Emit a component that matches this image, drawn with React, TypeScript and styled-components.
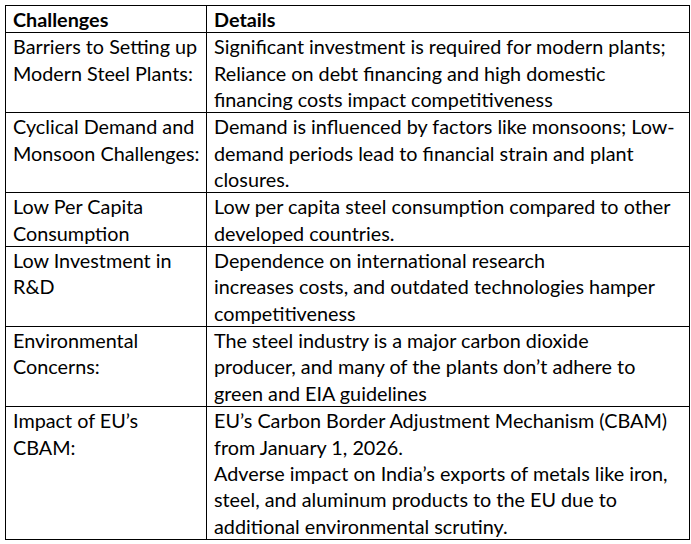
import React from "react";
import styled, { createGlobalStyle } from "styled-components";

const Global = createGlobalStyle`
  html, body { margin: 0; padding: 0; background: #ffffff; }
  body { font-family: "Lato", "Liberation Sans", sans-serif; color: #000; }
`;

const Page = styled.div`
  padding: 5px 0 0 5px;
  width: 691px;
  height: 544px;
  box-sizing: border-box;
`;

const Table = styled.table`
  border-collapse: collapse;
  width: 685px;
  table-layout: fixed;
  font-size: 19.8px;
  line-height: 26.35px;
`;

const Cell = styled.td<{ $head?: boolean }>`
  border: 1px solid #000;
  padding: 0 4px 0 7px;
  vertical-align: top;
  font-weight: ${(p) => (p.$head ? 700 : 400)};
  white-space: nowrap;
`;

const Line = styled.div`
  display: block;
`;

type Row = { c: string[]; d: string[] };

const rows: Row[] = [
  {
    c: ["Barriers to Setting up", "Modern Steel Plants:"],
    d: [
      "Significant investment is required for modern plants;",
      "Reliance on debt financing and high domestic",
      "financing costs impact competitiveness",
    ],
  },
  {
    c: ["Cyclical Demand and", "Monsoon Challenges:"],
    d: [
      "Demand is influenced by factors like monsoons; Low-",
      "demand periods lead to financial strain and plant",
      "closures.",
    ],
  },
  {
    c: ["Low Per Capita", "Consumption"],
    d: ["Low per capita steel consumption compared to other", "developed countries."],
  },
  {
    c: ["Low Investment in", "R&D"],
    d: [
      "Dependence on international research",
      "increases costs, and outdated technologies hamper",
      "competitiveness",
    ],
  },
  {
    c: ["Environmental", "Concerns:"],
    d: [
      "The steel industry is a major carbon dioxide",
      "producer, and many of the plants don\u2019t adhere to",
      "green and EIA guidelines",
    ],
  },
  {
    c: ["Impact of EU\u2019s", "CBAM:"],
    d: [
      "EU\u2019s Carbon Border Adjustment Mechanism (CBAM)",
      "from January 1, 2026.",
      "Adverse impact on India\u2019s exports of metals like iron,",
      "steel, and aluminum products to the EU due to",
      "additional environmental scrutiny.",
    ],
  },
];

export default function App() {
  return (
    <>
      <Global />
      <Page>
        <Table>
          <colgroup>
            <col style={{ width: 201 }} />
            <col />
          </colgroup>
          <tbody>
            <tr>
              <Cell $head>Challenges</Cell>
              <Cell $head>Details</Cell>
            </tr>
            {rows.map((r, i) => (
              <tr key={i}>
                <Cell>
                  {r.c.map((l, j) => (
                    <Line key={j}>{l}</Line>
                  ))}
                </Cell>
                <Cell>
                  {r.d.map((l, j) => (
                    <Line key={j}>{l}</Line>
                  ))}
                </Cell>
              </tr>
            ))}
          </tbody>
        </Table>
      </Page>
    </>
  );
}
